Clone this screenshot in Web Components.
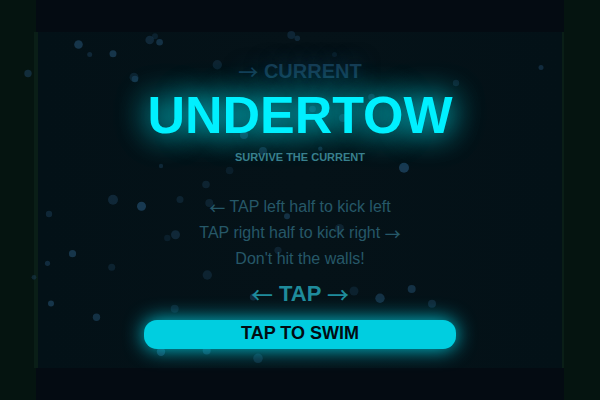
<!DOCTYPE html>
<html lang="en">
<head>
<meta charset="utf-8">
<meta name="viewport" content="width=device-width, initial-scale=1">
<title>Undertow</title>
<style>
body {
  margin: 0;
  background: #040b12;
  font-family: "Liberation Sans", Arial, sans-serif;
}
</style>
</head>
<body>

<undertow-river>
  <undertow-title>
    <span slot="current"><flow-arrow>→</flow-arrow> CURRENT</span>
    UNDERTOW
    <span slot="tagline">SURVIVE THE CURRENT</span>
  </undertow-title>
  <undertow-help>
    <p><flow-arrow>←</flow-arrow> TAP left half to kick left</p>
    <p>TAP right half to kick right <flow-arrow>→</flow-arrow></p>
    <p>Don't hit the walls!</p>
    <strong slot="hint"><flow-arrow>←</flow-arrow> TAP <flow-arrow>→</flow-arrow></strong>
  </undertow-help>
  <swim-button>TAP TO SWIM</swim-button>
</undertow-river>

<template id="river-template">
<style>
:host {
  display: grid;
  grid-template-columns: 6% 1fr 6%;
  position: relative;
  min-height: 100vh;
  overflow: hidden;
}
.wall {
  background: #051410;
}
.water {
  display: grid;
  grid-template-rows: 8vh 1fr 8vh;
  background: #040b12;
}
.channel {
  margin: 0 -2px;
  border: solid #0a1e17;
  border-width: 0 4px;
  background: linear-gradient(90deg, #031117, #051218 50%, #031117);
  grid-row: 2;
}
.content {
  display: flex;
  flex-direction: column;
  align-items: center;
  position: relative;
  padding-top: 26px;
}
.bubbles {
  position: absolute;
  inset: 0;
  width: 100%;
  height: 100%;
  fill: #1b3e58;
}
</style>
<div class="wall"></div>
<div class="water">
  <div class="channel">
    <div class="content"><slot></slot></div>
  </div>
</div>
<div class="wall"></div>
</template>

<template id="title-template">
<style>
:host {
  display: flex;
  flex-direction: column;
  align-items: center;
  text-align: center;
}
.current {
  font-size: 20px;
  font-weight: bold;
  line-height: 26px;
  color: #163c54;
  text-shadow: 0 0 20px #163c54;
}
h1 {
  margin: 0;
  font-size: 52px;
  line-height: 62px;
  color: #00f0ff;
  text-shadow: 0 0 30px #00f0ff, 0 0 40px #00f0ff50;
}
.tagline {
  font-size: 11px;
  font-weight: bold;
  line-height: 22px;
  color: #38808e;
}
</style>
<div class="current"><slot name="current"></slot></div>
<h1><slot></slot></h1>
<div class="tagline"><slot name="tagline"></slot></div>
</template>

<template id="help-template">
<style>
:host {
  display: block;
  margin-top: 26px;
  text-align: center;
  font-size: 16px;
  line-height: 26px;
  color: #265868;
}
::slotted(p) {
  margin: 0;
}
.hint {
  font-size: 22px;
  line-height: 44px;
  color: #1f8b9b;
}
</style>
<slot></slot>
<div class="hint"><slot name="hint"></slot></div>
</template>

<template id="arrow-template">
<style>
:host {
  font-family: "Noto Sans CJK SC", sans-serif;
  font-weight: 500;
  line-height: 0;
  vertical-align: -2px;
}
</style>
<slot></slot></template>

<template id="button-template">
<style>
:host {
  display: block;
  width: 52vw;
  margin-top: 4px;
}
button {
  display: block;
  width: 100%;
  padding: 0 0 3px;
  border: 0;
  border-radius: 13px;
  background: #00cee0;
  box-shadow: 0 0 20px #00cee0;
  font: bold 18px/26px "Liberation Sans", Arial, sans-serif;
  color: #020c12;
  cursor: pointer;
}
</style>
<button type="button"><slot></slot></button>
</template>

<script>
// x, y, radius, opacity
const BUBBLES = [
  [78.5, 44.5, 4.3, .8], [89.7, 54.5, 2.5, .5], [113, 53.7, 3.5, .8],
  [149.7, 40, 4.3, .5], [155, 36.3, 3, .35], [159.6, 42.3, 3.3, .7],
  [134, 77.3, 4.5, .4], [135, 79, 3.3, .7], [28, 73.5, 3.7, .6],
  [291.3, 35, 4, .45], [297.3, 38.3, 2.8, .5], [217.3, 64.8, 4.7, .4],
  [334.5, 54.5, 2.5, .3], [371.5, 97, 3.3, .5], [312.5, 109, 3.3, .5],
  [343, 118, 4, .5], [541, 67.5, 2.5, .6], [456, 83, 3.2, .4],
  [161, 166, 2.2, .5], [113, 199.7, 5, .5], [141.5, 206.3, 4.5, .9],
  [180, 199.5, 3.5, .4], [49, 214, 3.2, .5], [167.3, 238, 3.2, .3],
  [175.5, 234.7, 4.5, .5], [72.5, 253.7, 3.6, .8], [47.5, 263.3, 2.6, .6],
  [111.7, 267.3, 3.5, .4], [244, 135, 4, .6], [263, 151, 4, .6],
  [320.3, 148.7, 2.2, .6], [229.6, 170.5, 3.8, .3], [206, 184.5, 3.8, .4],
  [209.3, 203, 4, .4], [287, 216.3, 3, .7], [339.5, 228.5, 4.5, .4],
  [278, 250.3, 3.6, .4], [404, 167.7, 5, .9], [34, 277.3, 2.4, .5],
  [51, 303.5, 3, .8], [96.5, 317.3, 3.7, .7], [174.7, 308.7, 4, .4],
  [161, 351.7, 4.2, .8], [207.3, 275, 4.7, .4], [253.3, 297, 3.5, .6],
  [354, 291, 4.5, .35], [380, 298.3, 4.7, .7], [206.7, 350.5, 4, .7],
  [258, 358.3, 4.8, .5], [411.7, 289, 4, .7], [432, 303.7, 4, .5],
];

class TemplateElement extends HTMLElement {
  constructor(id) {
    super();
    this.attachShadow({ mode: "open" });
    const template = document.querySelector(id);
    this.shadowRoot.appendChild(template.content.cloneNode(true));
  }
}

class UndertowRiver extends TemplateElement {
  constructor() {
    super("#river-template");

    const ns = "http://www.w3.org/2000/svg";
    const svg = document.createElementNS(ns, "svg");
    svg.setAttribute("class", "bubbles");
    svg.setAttribute("viewBox", "0 0 600 400");
    svg.setAttribute("preserveAspectRatio", "xMidYMid slice");
    svg.setAttribute("aria-hidden", "true");

    for (const [x, y, r, opacity] of BUBBLES) {
      const circle = document.createElementNS(ns, "circle");
      circle.setAttribute("cx", x);
      circle.setAttribute("cy", y);
      circle.setAttribute("r", r);
      circle.setAttribute("opacity", opacity);
      svg.append(circle);
    }
    this.shadowRoot.querySelector(".wall").before(svg);
  }
}

class UndertowTitle extends TemplateElement {
  constructor() {
    super("#title-template");
  }
}

class UndertowHelp extends TemplateElement {
  constructor() {
    super("#help-template");
  }
}

class FlowArrow extends TemplateElement {
  constructor() {
    super("#arrow-template");
  }
}

class SwimButton extends TemplateElement {
  constructor() {
    super("#button-template");
  }
}

customElements.define("undertow-river", UndertowRiver);
customElements.define("undertow-title", UndertowTitle);
customElements.define("undertow-help", UndertowHelp);
customElements.define("flow-arrow", FlowArrow);
customElements.define("swim-button", SwimButton);
</script>
</body>
</html>
